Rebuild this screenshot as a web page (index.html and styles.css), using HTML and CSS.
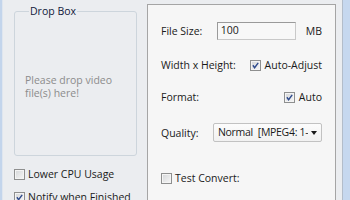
FILE: index.html
```html
<!DOCTYPE html>
<html>
<head>
<meta charset="utf-8">
<link rel="stylesheet" href="styles.css">
</head>
<body>
<div class="window">
  <div class="frame-left"></div>
  <div class="client">
    <div class="left-col">
      <fieldset class="dropbox">
        <legend>Drop Box</legend>
        <p class="hint">Please drop video<br>file(s) here!</p>
      </fieldset>
      <label class="check first"><span class="box"></span>Lower CPU Usage</label>
      <label class="check second"><span class="box"><svg viewBox="0 0 11 11"><path d="M2.3 5.2 L4.4 8.2 L8.8 2.2"/></svg></span>Notify when Finished</label>
    </div>
    <div class="panel">
      <div class="row r1">
        <span class="lbl">File Size:</span>
        <span class="grp"><span class="input">100</span><span class="unit">MB</span></span>
      </div>
      <div class="row r2">
        <span class="lbl">Width x Height:</span>
        <label class="check"><span class="box"><svg viewBox="0 0 11 11"><path d="M2.3 5.2 L4.4 8.2 L8.8 2.2"/></svg></span>Auto-Adjust</label>
      </div>
      <div class="row r3">
        <span class="lbl">Format:</span>
        <label class="check"><span class="box"><svg viewBox="0 0 11 11"><path d="M2.3 5.2 L4.4 8.2 L8.8 2.2"/></svg></span>Auto</label>
      </div>
      <div class="row r4">
        <span class="lbl">Quality:</span>
        <span class="combo"><span class="combo-text">Normal  [MPEG4: 1-Pass]</span><span class="arrow"></span></span>
      </div>
      <div class="row r5">
        <label class="check"><span class="box"></span>Test Convert:</label>
      </div>
    </div>
  </div>
  <div class="frame-right"></div>
</div>
</body>
</html>
```

FILE: styles.css
```css
html, body {
  margin: 0;
  padding: 0;
  width: 350px;
  height: 200px;
  overflow: hidden;
}
body {
  font-family: "Open Sans", "Noto Sans", sans-serif;
  font-size: 10.5px;
  color: #1a1a1a;
  background: #ebedf0;
}
.window {
  display: flex;
  width: 350px;
  height: 200px;
  overflow: hidden;
}
.frame-left {
  width: 2px;
  flex: none;
  background: #c3d5ec;
  border-right: 1px solid #dfe6ef;
}
.frame-right {
  width: 7px;
  flex: none;
  background: #c6d8ef;
  border-left: 1px solid #b3bdca;
}
.client {
  flex: 1;
  display: flex;
  align-items: flex-start;
  padding-top: 4px;
  background: #ebedf0;
}
.left-col {
  width: 123px;
  padding-left: 11px;
  flex: none;
  display: flex;
  flex-direction: column;
}
.dropbox {
  margin: 0;
  box-sizing: border-box;
  width: 123px;
  height: 152px;
  padding: 0 0 0 10px;
  border: 1px solid #cdd5dc;
  border-radius: 3px;
}
.dropbox legend {
  margin-left: 4px;
  padding: 0 1px;
  line-height: 14px;
  color: #10183a;
}
.hint {
  margin: 56px 0 0 0;
  line-height: 13px;
  color: #8c8c8c;
}
.check {
  display: flex;
  align-items: center;
  gap: 3px;
  line-height: 13px;
  white-space: nowrap;
}
.left-col .first { margin-top: 12px; }
.left-col .second { margin-top: 10px; }
.box {
  box-sizing: border-box;
  width: 11px;
  height: 11px;
  flex: none;
  border: 1px solid #8e8f8f;
  background: linear-gradient(135deg, #d4d6d8, #f7f7f7);
  box-shadow: inset 0 0 0 1px #f4f4f4;
  display: flex;
}
.box svg {
  width: 9px;
  height: 9px;
  fill: none;
  stroke: #2e4a8c;
  stroke-width: 1.7;
}
.panel {
  box-sizing: border-box;
  width: 189px;
  height: 210px;
  margin-left: 10px;
  flex: none;
  border: 1px solid #a5a5a5;
  background: #f6f6f6;
  padding: 17px 13px 0 13px;
  display: flex;
  flex-direction: column;
}
.row {
  display: flex;
  align-items: center;
  justify-content: space-between;
  white-space: nowrap;
}
.r1 { height: 18px; }
.r2 { height: 18px; margin-top: 16px; }
.r3 { height: 18px; margin-top: 14px; }
.r4 { height: 19px; margin-top: 17px; }
.r5 { height: 18px; margin-top: 27px; }
.r2 .check, .r3 .check { gap: 4px; }
.grp {
  display: flex;
  align-items: center;
  gap: 10px;
}
.input {
  box-sizing: border-box;
  width: 79px;
  height: 18px;
  border: 1px solid #9a9a9a;
  border-right-color: #c9c9c9;
  border-bottom-color: #c9c9c9;
  background: #f8f8f8;
  padding: 1px 3px 0 3px;
  line-height: 13px;
  align-self: stretch;
}
.combo {
  box-sizing: border-box;
  width: 109px;
  height: 19px;
  border: 1px solid #c2c2c2;
  border-radius: 2px;
  background: linear-gradient(#fcfcfc, #f1f1f1);
  display: flex;
  align-items: center;
  padding: 0 4px 0 4px;
}
.combo-text {
  flex: 1;
  overflow: hidden;
  white-space: pre;
  line-height: 13px;
  letter-spacing: -0.3px;
}
.arrow {
  flex: none;
  margin-left: 3px;
  width: 0;
  height: 0;
  border-left: 3.5px solid transparent;
  border-right: 3.5px solid transparent;
  border-top: 4px solid #1a1a1a;
}
```
